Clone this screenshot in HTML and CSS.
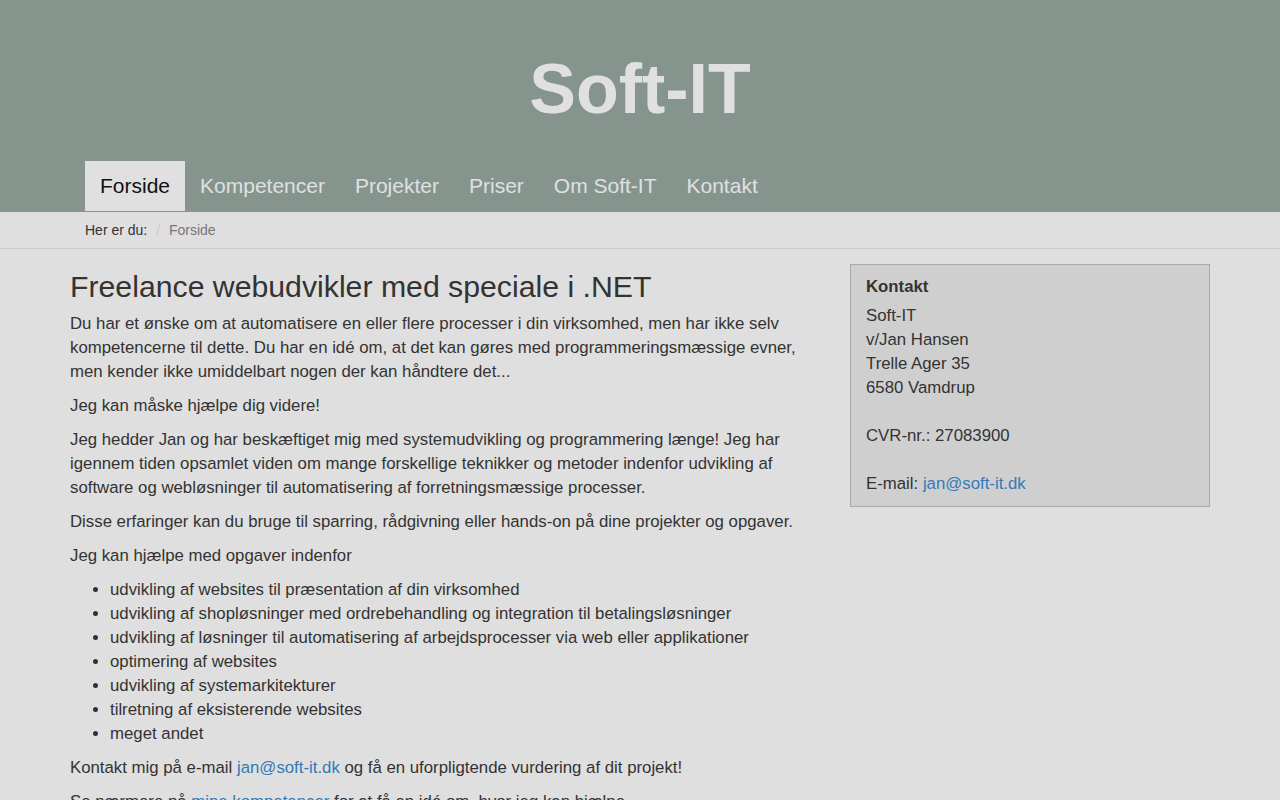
FILE: index.html
```html
<!DOCTYPE html>
<html lang="da">
<head>
<meta charset="utf-8">
<title>Soft-IT</title>
<link rel="stylesheet" href="styles.css">
</head>
<body>
<header class="site-header">
  <div class="container">
    <h1 class="brand">Soft-IT</h1>
    <nav class="main-nav">
      <a class="nav-item active" href="#">Forside</a>
      <a class="nav-item" href="#">Kompetencer</a>
      <a class="nav-item" href="#">Projekter</a>
      <a class="nav-item" href="#">Priser</a>
      <a class="nav-item" href="#">Om Soft-IT</a>
      <a class="nav-item" href="#">Kontakt</a>
    </nav>
  </div>
</header>
<div class="crumbbar">
  <div class="container">
    <ol class="breadcrumb">
      <li>Her er du:</li>
      <li class="current">Forside</li>
    </ol>
  </div>
</div>
<div class="container main">
  <main class="content">
    <h2 class="page-title">Freelance webudvikler med speciale i .NET</h2>
    <p>Du har et ønske om at automatisere en eller flere processer i din virksomhed, men har ikke selv kompetencerne til dette. Du har en idé om, at det kan gøres med programmeringsmæssige evner, men kender ikke umiddelbart nogen der kan håndtere det...</p>
    <p>Jeg kan måske hjælpe dig videre!</p>
    <p>Jeg hedder Jan og har beskæftiget mig med systemudvikling og programmering længe! Jeg har igennem tiden opsamlet viden om mange forskellige teknikker og metoder indenfor udvikling af software og webløsninger til automatisering af forretningsmæssige processer.</p>
    <p>Disse erfaringer kan du bruge til sparring, rådgivning eller hands-on på dine projekter og opgaver.</p>
    <p>Jeg kan hjælpe med opgaver indenfor</p>
    <ul class="tasks">
      <li>udvikling af websites til præsentation af din virksomhed</li>
      <li>udvikling af shopløsninger med ordrebehandling og integration til betalingsløsninger</li>
      <li>udvikling af løsninger til automatisering af arbejdsprocesser via web eller applikationer</li>
      <li>optimering af websites</li>
      <li>udvikling af systemarkitekturer</li>
      <li>tilretning af eksisterende websites</li>
      <li>meget andet</li>
    </ul>
    <p>Kontakt mig på e-mail <a href="#">jan@soft-it.dk</a> og få en uforpligtende vurdering af dit projekt!</p>
    <p>Se nærmere på <a href="#">mine kompetencer</a> for at få en idé om, hvor jeg kan hjælpe...</p>
  </main>
  <aside class="sidebar">
    <div class="contact-box">
      <h3 class="box-title">Kontakt</h3>
      <p class="address">Soft-IT<br>v/Jan Hansen<br>Trelle Ager 35<br>6580 Vamdrup<br><br>CVR-nr.: 27083900<br><br>E-mail: <a href="#">jan@soft-it.dk</a></p>
    </div>
  </aside>
</div>
</body>
</html>
```

FILE: styles.css
```css
* { box-sizing: border-box; }
html, body { margin: 0; padding: 0; }
body {
  background: #dfdfdf;
  color: #333;
  font-family: "Liberation Sans", Arial, sans-serif;
  font-size: 16.8px;
  line-height: 24px;
}
a { color: #337ab7; text-decoration: none; }

.container {
  width: 1140px;
  margin: 0 auto;
}

.site-header {
  background: #85958e;
  height: 212px;
}
.brand {
  margin: 0;
  padding-top: 49px;
  height: 161px;
  text-align: center;
  font-size: 70px;
  line-height: 80px;
  font-weight: bold;
  color: #e0e0e0;
}
.main-nav {
  display: flex;
  padding-left: 15px;
  height: 51px;
}
.nav-item {
  display: block;
  padding: 0 15px;
  height: 50px;
  line-height: 50px;
  font-size: 21px;
  color: #e0e0e0;
}
.nav-item.active {
  background: #e0e0e0;
  color: #111;
}

.crumbbar {
  border-bottom: 1px solid #cacaca;
}
.breadcrumb {
  list-style: none;
  margin: 0;
  padding: 8px 15px;
  font-size: 14px;
  line-height: 20px;
}
.breadcrumb li { display: inline-block; color: #333; }
.breadcrumb li + li::before {
  content: "/\00a0";
  padding: 0 5px;
  color: #ccc;
}
.breadcrumb li.current { color: #777; }

.main {
  display: flex;
  gap: 30px;
}
.content {
  width: 750px;
}
.page-title {
  margin: 21px 0 9px;
  font-size: 30.24px;
  line-height: 33px;
  font-weight: normal;
  color: #333;
}
.content p { margin: 0 0 10px; }
.tasks {
  margin: 0 0 10px;
  padding-left: 40px;
}

.sidebar {
  width: 360px;
}
.contact-box {
  margin-top: 15px;
  background: #cfcfcf;
  border: 1px solid #aaa;
  padding: 10px 15px 10px;
}
.box-title {
  margin: 0 0 5px;
  font-size: 16.8px;
  line-height: 24px;
  font-weight: bold;
}
.address { margin: 0; }
```
